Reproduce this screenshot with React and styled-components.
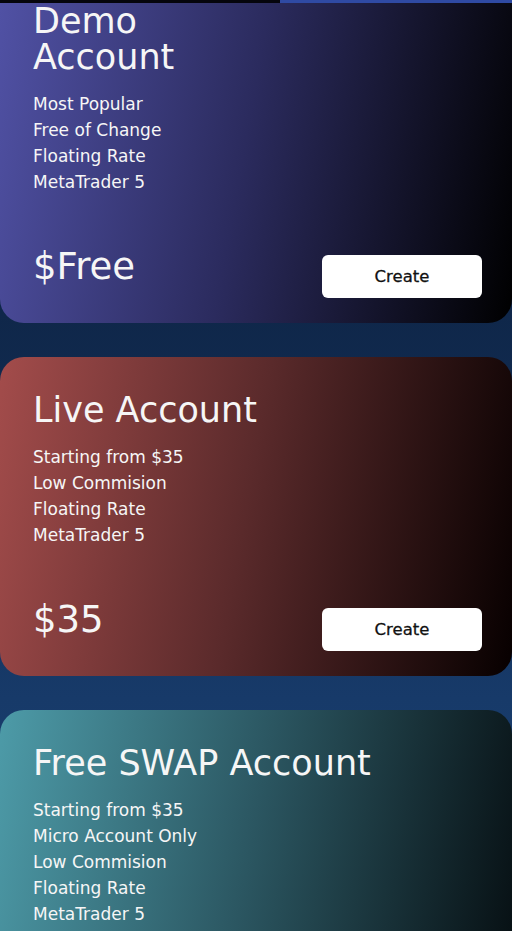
import React from "react";
import styled, { createGlobalStyle } from "styled-components";

const accounts = [
  {
    id: "demo",
    title: ["Demo", "Account"],
    features: ["Most Popular", "Free of Change", "Floating Rate", "MetaTrader 5"],
    price: "$Free",
    from: "#5152a6",
    mid: "#2b2b5e",
    to: "#000000",
  },
  {
    id: "live",
    title: ["Live Account"],
    features: ["Starting from $35", "Low Commision", "Floating Rate", "MetaTrader 5"],
    price: "$35",
    from: "#a34c4b",
    mid: "#5a2a2b",
    to: "#070000",
  },
  {
    id: "swap",
    title: ["Free SWAP Account"],
    features: [
      "Starting from $35",
      "Micro Account Only",
      "Low Commision",
      "Floating Rate",
      "MetaTrader 5",
    ],
    price: "$35",
    from: "#4d9ba8",
    mid: "#2b5661",
    to: "#050c0f",
  },
];

const AccountCard = ({ account }) => {
  return (
    <Card $from={account.from} $mid={account.mid} $to={account.to}>
      <Title>
        {account.title.map((line) => (
          <span key={line}>{line}</span>
        ))}
      </Title>
      <Features>
        {account.features.map((f) => (
          <li key={f}>{f}</li>
        ))}
      </Features>
      <Footer>
        <Price>{account.price}</Price>
        <CreateButton>Create</CreateButton>
      </Footer>
    </Card>
  );
};

export default function App() {
  return (
    <>
      <GlobalStyle />
      <TopBar>
        <BarTrack />
        <BarFill />
      </TopBar>
      <Page>
        <CardList>
          {accounts.map((acc) => (
            <AccountCard key={acc.id} account={acc} />
          ))}
        </CardList>
      </Page>
    </>
  );
}

const GlobalStyle = createGlobalStyle`
  * { box-sizing: border-box; }
  html, body {
    margin: 0;
    padding: 0;
    background: #0c2140;
    font-family: "DejaVu Sans", "Noto Sans", sans-serif;
    overflow: hidden;
  }
`;

const TopBar = styled.div`
  position: fixed;
  top: 0;
  left: 0;
  width: 100%;
  height: 3px;
  display: flex;
  z-index: 10;
`;

const BarTrack = styled.div`
  width: 280px;
  background: #05050c;
`;

const BarFill = styled.div`
  flex: 1;
  background: #2f4aa3;
`;

const Page = styled.div`
  width: 512px;
  height: 931px;
  overflow: hidden;
  background: linear-gradient(180deg, #0a1d3a 0%, #10294d 40%, #173a69 75%, #1b4274 100%);
`;

const CardList = styled.div`
  display: flex;
  flex-direction: column;
  gap: 34px;
  margin-top: -32px;
`;

const Card = styled.section`
  display: flex;
  flex-direction: column;
  padding: 35px 30px 25px 33px;
  border-radius: 24px;
  color: #f6f6f6;
  background: linear-gradient(
    100deg,
    ${(p) => p.$from} 0%,
    ${(p) => p.$mid} 48%,
    ${(p) => p.$to} 100%
  );
`;

const Title = styled.h2`
  margin: 0;
  font-size: 35px;
  font-weight: 400;
  line-height: 36px;
  display: flex;
  flex-direction: column;
`;

const Features = styled.ul`
  list-style: none;
  margin: 16px 0 0;
  padding: 0;
  font-size: 17px;
  line-height: 26px;
`;

const Footer = styled.div`
  display: flex;
  justify-content: space-between;
  align-items: flex-end;
  margin-top: 50px;
`;

const Price = styled.div`
  font-size: 37px;
  line-height: 43px;
  margin-bottom: 10px;
`;

const CreateButton = styled.button`
  width: 160px;
  height: 43px;
  border: none;
  border-radius: 6px;
  background: #ffffff;
  color: #111;
  font-family: "DejaVu Sans", "Noto Sans", sans-serif;
  font-size: 16.5px;
  -webkit-text-stroke: 0.3px #111;
  cursor: pointer;
`;
